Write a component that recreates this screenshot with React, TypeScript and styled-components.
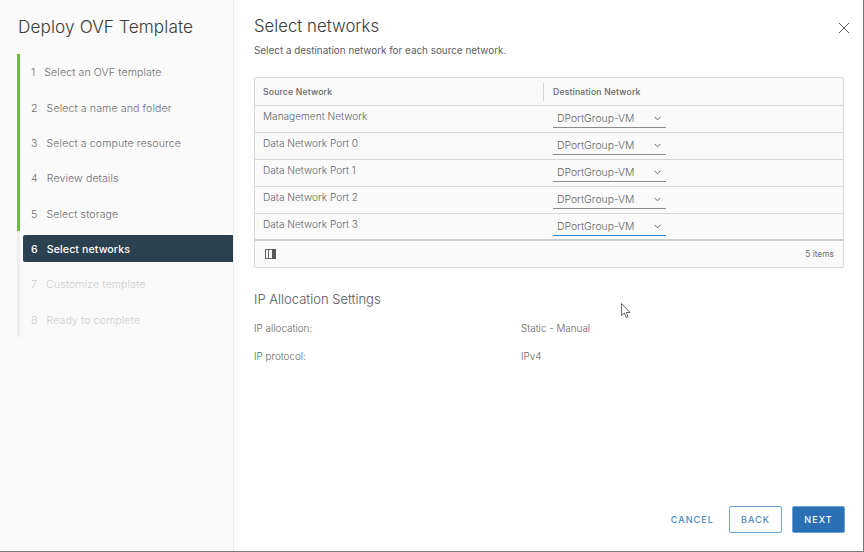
import styled, { createGlobalStyle } from 'styled-components'

const GlobalStyle = createGlobalStyle`
  html, body {
    margin: 0;
    padding: 0;
    background: #fff;
  }
  * {
    box-sizing: border-box;
  }
`

const fontStack = `Inter, "Noto Sans", "Liberation Sans", sans-serif`

type StepState = 'done' | 'active' | 'todo'

const Dialog = styled.div`
  position: relative;
  display: flex;
  width: 864px;
  height: 552px;
  overflow: hidden;
  background: #fff;
  border-right: 1px solid #7a7a7a;
  border-bottom: 1px solid #7a7a7a;
  font-family: ${fontStack};
  color: #565656;
`

const Sidebar = styled.aside`
  width: 234px;
  flex-shrink: 0;
  background: #fafafa;
  border-right: 1px solid #eeeeee;
  padding: 17px 0 0 17px;
`

const WizardTitle = styled.h1`
  margin: 0 0 17px 1px;
  font-size: 17.2px;
  line-height: 20px;
  font-weight: 300;
  letter-spacing: 0.1px;
  color: #3a3a3a;
`

const Steps = styled.ol`
  list-style: none;
  margin: 0;
  padding: 0;
`

const Step = styled.li<{ state: StepState }>`
  height: 35.375px;
  display: flex;
  align-items: center;
  border-left: 3px solid ${p => (p.state === 'done' ? '#6cbf24' : '#eeeeee')};
  padding-left: 3px;
`

const StepLabel = styled.div<{ state: StepState }>`
  flex: 1;
  height: 27px;
  display: flex;
  align-items: center;
  padding: 2px 0 0 8px;
  font-size: 10.6px;
  letter-spacing: 0.1px;
  border-radius: 2px 0 0 2px;
  white-space: nowrap;
  font-weight: ${p => (p.state === 'active' ? 500 : 300)};
  background: ${p => (p.state === 'active' ? '#2b4150' : 'transparent')};
  color: ${p =>
    p.state === 'active' ? '#ffffff' : p.state === 'done' ? '#6e6e6e' : '#cdcdcd'};
`

const StepNumber = styled.span`
  margin-right: 9px;
  flex-shrink: 0;
`

const Main = styled.main`
  flex: 1;
  min-width: 0;
  display: flex;
  flex-direction: column;
  padding: 16px 20px 18px 20px;
`

const TitleRow = styled.div`
  display: flex;
  justify-content: space-between;
`

const PageTitle = styled.h2`
  margin: 0;
  font-size: 16.8px;
  line-height: 20px;
  font-weight: 300;
  color: #3a3a3a;
`

const CloseButton = styled.button`
  border: 0;
  background: none;
  padding: 0;
  margin: 6px -7px 0 0;
  width: 12px;
  height: 12px;
  color: #5f5f5f;
  display: block;
`

const Subtitle = styled.p`
  margin: 8px 0 0;
  font-size: 9.9px;
  line-height: 12px;
  font-weight: 400;
  color: #5e5e5e;
`

const Grid = styled.div`
  margin-top: 21px;
  height: 191px;
  width: 590px;
  border: 1px solid #d7d7d7;
  border-radius: 2px;
  background: #fafafa;
  display: flex;
  flex-direction: column;
`

const HeaderRow = styled.div`
  height: 28px;
  display: grid;
  grid-template-columns: 288px 1fr;
  align-items: center;
  border-bottom: 1px solid #d7d7d7;
`

const HeaderCell = styled.div<{ divided?: boolean }>`
  height: 18px;
  line-height: 18px;
  padding-left: ${p => (p.divided ? '9px' : '8px')};
  font-size: 8.6px;
  font-weight: 500;
  letter-spacing: 0.2px;
  color: #666666;
  border-left: ${p => (p.divided ? '1px solid #d7d7d7' : '0')};
`

const Row = styled.div<{ last?: boolean }>`
  height: 27px;
  display: grid;
  grid-template-columns: 288px 1fr;
  border-bottom: ${p => (p.last ? '2px solid #cccccc' : '1px solid #d7d7d7')};
`

const SourceCell = styled.div`
  padding: 4px 0 0 8px;
  font-size: 10.1px;
  line-height: 12px;
  font-weight: 300;
  color: #666666;
`

const SelectCell = styled.div`
  padding: 4px 0 0 10px;
`

const SelectBox = styled.div<{ focused?: boolean }>`
  width: 113px;
  height: 18px;
  padding: 0 5px 0 4px;
  display: flex;
  align-items: center;
  justify-content: space-between;
  border-bottom: 1px solid ${p => (p.focused ? '#2a82cc' : '#8c8c8c')};
  font-size: 10.4px;
  font-weight: 300;
  color: #666666;
`

const GridFooter = styled.div`
  flex: 1;
  display: flex;
  align-items: center;
  justify-content: space-between;
  padding: 0 9px 0 10px;
  font-size: 8.4px;
  font-weight: 400;
  color: #707070;
`

const SectionTitle = styled.h3`
  margin: 23px 0 0;
  font-size: 13px;
  line-height: 16px;
  font-weight: 300;
  color: #565656;
`

const InfoList = styled.dl`
  margin: 14px 0 0;
  display: grid;
  grid-template-columns: 267px 1fr;
  grid-auto-rows: 28px;
  font-size: 9.9px;
  font-weight: 300;
  color: #666666;
`

const InfoLabel = styled.dt`
  line-height: 14px;
`

const InfoValue = styled.dd`
  margin: 0;
  line-height: 14px;
`

const Actions = styled.div`
  margin-top: auto;
  display: flex;
  justify-content: flex-end;
  align-items: center;
  margin-right: -2px;
`

const ActionButton = styled.button<{ kind: 'link' | 'outline' | 'solid' }>`
  height: 27px;
  width: ${p => (p.kind === 'link' ? 'auto' : '53px')};
  margin-left: ${p => (p.kind === 'solid' ? '10px' : '15px')};
  padding: 0;
  border-radius: 2px;
  font-family: ${fontStack};
  font-size: 9px;
  font-weight: 500;
  letter-spacing: 1.1px;
  border: ${p => (p.kind === 'link' ? '0' : '1px solid #6ba3d6')};
  background: ${p => (p.kind === 'solid' ? '#2b6fb5' : 'transparent')};
  color: ${p => (p.kind === 'solid' ? '#ffffff' : '#4a8ac4')};
`

const Cursor = styled.svg`
  position: absolute;
  left: 621px;
  top: 303px;
`

const steps = [
  'Select an OVF template',
  'Select a name and folder',
  'Select a compute resource',
  'Review details',
  'Select storage',
  'Select networks',
  'Customize template',
  'Ready to complete',
]

const networks = [
  'Management Network',
  'Data Network Port 0',
  'Data Network Port 1',
  'Data Network Port 2',
  'Data Network Port 3',
]

const stepState = (i: number): StepState =>
  i < 5 ? 'done' : i === 5 ? 'active' : 'todo'

const Chevron = () => (
  <svg width="7" height="5" viewBox="0 0 7 5" fill="none">
    <path d="M0.5 0.8 L3.5 3.8 L6.5 0.8" stroke="#666" strokeWidth="1" />
  </svg>
)

const ColumnsIcon = () => (
  <svg width="11" height="10" viewBox="0 0 11 10" fill="none">
    <rect x="0.5" y="0.5" width="10" height="9" stroke="#666" />
    <line x1="3.5" y1="0" x2="3.5" y2="10" stroke="#666" />
    <rect x="7" y="0" width="4" height="10" fill="#555" />
  </svg>
)

export default function App() {
  return (
    <Dialog>
      <GlobalStyle />
      <Sidebar>
        <WizardTitle>Deploy OVF Template</WizardTitle>
        <Steps>
          {steps.map((s, i) => (
            <Step key={s} state={stepState(i)}>
              <StepLabel state={stepState(i)}>
                <StepNumber>{i + 1}</StepNumber>
                {s}
              </StepLabel>
            </Step>
          ))}
        </Steps>
      </Sidebar>
      <Main>
        <TitleRow>
          <PageTitle>Select networks</PageTitle>
          <CloseButton>
            <svg width="12" height="12" viewBox="0 0 12 12" fill="none">
              <path d="M1 1 L11 11 M11 1 L1 11" stroke="currentColor" strokeWidth="1" />
            </svg>
          </CloseButton>
        </TitleRow>
        <Subtitle>Select a destination network for each source network.</Subtitle>
        <Grid>
          <HeaderRow>
            <HeaderCell>Source Network</HeaderCell>
            <HeaderCell divided>Destination Network</HeaderCell>
          </HeaderRow>
          {networks.map((n, i) => (
            <Row key={n} last={i === networks.length - 1}>
              <SourceCell>{n}</SourceCell>
              <SelectCell>
                <SelectBox focused={i === networks.length - 1}>
                  DPortGroup-VM
                  <Chevron />
                </SelectBox>
              </SelectCell>
            </Row>
          ))}
          <GridFooter>
            <ColumnsIcon />
            <span>5 items</span>
          </GridFooter>
        </Grid>
        <SectionTitle>IP Allocation Settings</SectionTitle>
        <InfoList>
          <InfoLabel>IP allocation:</InfoLabel>
          <InfoValue>Static - Manual</InfoValue>
          <InfoLabel>IP protocol:</InfoLabel>
          <InfoValue>IPv4</InfoValue>
        </InfoList>
        <Actions>
          <ActionButton kind="link">CANCEL</ActionButton>
          <ActionButton kind="outline">BACK</ActionButton>
          <ActionButton kind="solid">NEXT</ActionButton>
        </Actions>
      </Main>
      <Cursor width="11" height="16" viewBox="0 0 11 16">
        <path d="M0.5 0.5 L0.5 12.5 L3.3 10 L5.2 14.5 L7 13.7 L5.2 9.5 L9 9.5 Z" fill="#fff" stroke="#444" strokeWidth="0.8" />
      </Cursor>
    </Dialog>
  )
}
